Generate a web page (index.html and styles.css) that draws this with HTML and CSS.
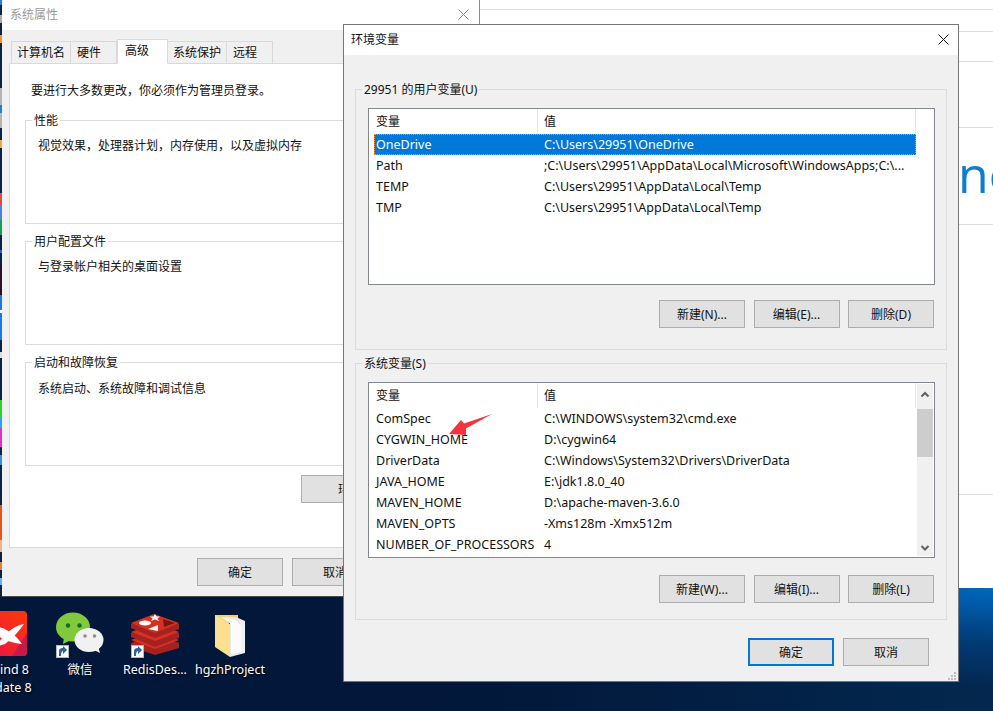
FILE: index.html
```html
<!DOCTYPE html>
<html lang="zh-CN">
<head>
<meta charset="UTF-8" />
<meta name="viewport" content="width=device-width, initial-scale=1" />
<title>环境变量</title>
<link rel="stylesheet" href="styles.css">
</head>
<body>

<div class="desktop">
  <div class="strip"></div>

  <!-- navegador detras de los dialogos -->
  <div class="browser">
    <div class="rule rule-a"></div>
    <div class="rule rule-b"></div>
    <div class="rule rule-c"></div>
    <div class="rule rule-d"></div>
    <div class="rule rule-e"><span class="big-word">no</span></div>
    <div class="rule rule-f"></div>
  </div>

  <div class="desk-icons">
    <div class="desk-icon">
      <svg width="48" height="48" viewBox="0 0 48 48">
        <defs>
          <linearGradient id="xm" x1="1" y1="0" x2="0" y2="1">
            <stop offset="0" stop-color="#ff3808"/>
            <stop offset="1" stop-color="#e6104e"/>
          </linearGradient>
        </defs>
        <rect x="-6" y="0" width="52" height="45" rx="4" fill="url(#xm)"/>
        <path d="M46 22 V41 a4 4 0 0 1 -4 4 H31 Z" fill="#c9184a"/>
        <path d="M14 15 C24 17 33 22 41 33 C33 32 24 30 14 23 Z" fill="#fff"/>
        <path d="M43 13 C36 14 26 19 14 36 L24 33 C32 27 38 20 43 13 Z" fill="#fff"/>
      </svg>
      <span class="desk-label">Xmind 8 Update 8</span>
    </div>
    <div class="desk-icon">
      <svg width="48" height="48" viewBox="0 0 48 48">
        <ellipse cx="17" cy="16" rx="17" ry="14.5" fill="#7fca3c"/>
        <path d="M8 26 L7 33 L15 29 Z" fill="#7fca3c"/>
        <circle cx="12" cy="14.5" r="2.2" fill="#1b6b1e"/>
        <circle cx="23.5" cy="14.5" r="2.2" fill="#1b6b1e"/>
        <ellipse cx="33" cy="29" rx="14.5" ry="12" fill="#f1f2f0"/>
        <path d="M38 39 L44 42 L42 35 Z" fill="#f1f2f0"/>
        <circle cx="29" cy="25" r="1.8" fill="#8d8d8d"/>
        <circle cx="38.5" cy="25" r="1.8" fill="#8d8d8d"/>
        <rect x="0.5" y="34.5" width="12" height="12" fill="#fff" stroke="#b5b5b5"/>
        <path d="M3 45 V40 Q3 37 7 37 V35 L11 39 L7 43 V40 Q5 40 5 45 Z" fill="#2f5f9f"/>
      </svg>
      <span class="desk-label">微信</span>
    </div>
    <div class="desk-icon">
      <svg width="48" height="48" viewBox="0 0 48 48">
        <path d="M0 32 L24 23 L48 32 V37 L24 44 L0 36 Z" fill="#a32320"/>
        <path d="M0 29 L24 38 L48 29 L24 20 Z" fill="#d92f22"/>
        <path d="M0 22 L24 13 L48 22 V27 L24 36 L0 26 Z" fill="#a32320"/>
        <path d="M0 21 L24 30 L48 21 L24 12 Z" fill="#d92f22"/>
        <path d="M0 13 L24 4 L48 13 V18 L24 27 L0 17 Z" fill="#a32320"/>
        <path d="M0 12 L23 3 L48 12 L24 22 Z" fill="#d92f22"/>
        <ellipse cx="14" cy="12" rx="6" ry="2.6" fill="#fff"/>
        <path d="M24 3 L25.5 5.5 L29 5.5 L26.5 7.5 L28 10 L24 8.5 L20 10 L21.5 7.5 L19 5.5 L22.5 5.5 Z" fill="#fff"/>
        <path d="M17 18 L27 14 L27 20 Z" fill="#fff"/>
        <path d="M32 8 L44 12 L33 16 Z" fill="#7a1411"/>
        <rect x="0.5" y="34.5" width="12" height="12" fill="#fff" stroke="#b5b5b5"/>
        <path d="M3 45 V40 Q3 37 7 37 V35 L11 39 L7 43 V40 Q5 40 5 45 Z" fill="#2f5f9f"/>
      </svg>
      <span class="desk-label">RedisDes...</span>
    </div>
    <div class="desk-icon">
      <svg width="48" height="48" viewBox="0 0 48 48">
        <path d="M9 4 H32 V12 H14 V38 L9 34 Z" fill="#f5d06f"/>
        <path d="M14 6 H30 L39 10 V42 L24 46 V12 Z" fill="#e9e9ec"/>
        <path d="M18 7 L29 9 L35 14 V41 L25 44 V13 Z" fill="#fbfbfb"/>
        <path d="M9 4 L24 13 V46 L9 36 Z" fill="#fce08f"/>
        <path d="M33 9 L39 11 V41 L35 42 V13 Z" fill="#f2f2f4"/>
      </svg>
      <span class="desk-label">hgzhProject</span>
    </div>
  </div>

  <!-- Propiedades del sistema -->
  <div class="window sys-window">
    <div class="titlebar sys-title">
      <span>系统属性</span>
      <svg class="close" width="11" height="11" viewBox="0 0 11 11"><path d="M0.5 0.5 L10.5 10.5 M10.5 0.5 L0.5 10.5" stroke="#8a8a8a" fill="none"/></svg>
    </div>
    <div class="sys-body">
      <div class="tabs">
        <div class="tab">计算机名</div>
        <div class="tab tab-short">硬件</div>
        <div class="tab tab-active">高级</div>
        <div class="tab">系统保护</div>
        <div class="tab tab-short">远程</div>
      </div>
      <div class="pane">
        <p class="pane-note">要进行大多数更改，你必须作为管理员登录。</p>
        <fieldset class="group sys-group">
          <legend>性能</legend>
          <p class="group-text">视觉效果，处理器计划，内存使用，以及虚拟内存</p>
        </fieldset>
        <fieldset class="group sys-group">
          <legend>用户配置文件</legend>
          <p class="group-text">与登录帐户相关的桌面设置</p>
        </fieldset>
        <fieldset class="group sys-group group-boot">
          <legend>启动和故障恢复</legend>
          <p class="group-text">系统启动、系统故障和调试信息</p>
        </fieldset>
        <div class="env-row">
          <button class="btn btn-env">环境变量(N)...</button>
        </div>
      </div>
      <div class="btn-row sys-buttons">
        <button class="btn">确定</button>
        <button class="btn">取消</button>
        <button class="btn">应用(A)</button>
      </div>
    </div>
  </div>

  <!-- Variables de entorno -->
  <div class="window env-window">
    <div class="titlebar env-title">
      <span>环境变量</span>
      <svg class="close" width="11" height="11" viewBox="0 0 11 11"><path d="M0.5 0.5 L10.5 10.5 M10.5 0.5 L0.5 10.5" stroke="#111" fill="none"/></svg>
    </div>
    <div class="env-body">
      <fieldset class="group user-group">
        <legend>29951 的用户变量(U)</legend>
        <div class="list user-list">
          <div class="list-body">
            <div class="row head"><div class="cell">变量</div><div class="cell">值</div></div>
            <div class="row selected"><div class="cell">OneDrive</div><div class="cell">C:\Users\29951\OneDrive</div></div>
            <div class="row"><div class="cell">Path</div><div class="cell">;C:\Users\29951\AppData\Local\Microsoft\WindowsApps;C:\...</div></div>
            <div class="row"><div class="cell">TEMP</div><div class="cell">C:\Users\29951\AppData\Local\Temp</div></div>
            <div class="row"><div class="cell">TMP</div><div class="cell">C:\Users\29951\AppData\Local\Temp</div></div>
          </div>
        </div>
        <div class="btn-row list-buttons">
          <button class="btn">新建(N)...</button>
          <button class="btn">编辑(E)...</button>
          <button class="btn">删除(D)</button>
        </div>
      </fieldset>

      <fieldset class="group system-group">
        <legend>系统变量(S)</legend>
        <div class="list system-list">
          <div class="list-body">
            <div class="row head"><div class="cell">变量</div><div class="cell">值</div></div>
            <div class="row"><div class="cell">ComSpec</div><div class="cell">C:\WINDOWS\system32\cmd.exe</div></div>
            <div class="row"><div class="cell">CYGWIN_HOME</div><div class="cell">D:\cygwin64</div></div>
            <div class="row"><div class="cell">DriverData</div><div class="cell">C:\Windows\System32\Drivers\DriverData</div></div>
            <div class="row"><div class="cell">JAVA_HOME</div><div class="cell">E:\jdk1.8.0_40</div></div>
            <div class="row"><div class="cell">MAVEN_HOME</div><div class="cell">D:\apache-maven-3.6.0</div></div>
            <div class="row"><div class="cell">MAVEN_OPTS</div><div class="cell">-Xms128m -Xmx512m</div></div>
            <div class="row"><div class="cell">NUMBER_OF_PROCESSORS</div><div class="cell">4</div></div>
          </div>
          <div class="scrollbar">
            <svg class="chevron" width="16" height="25" viewBox="0 0 16 25"><path d="M4.5 12.5 L8 9 L11.5 12.5" stroke="#606060" stroke-width="2" fill="none"/></svg>
            <div class="thumb"></div>
            <svg class="chevron chevron-end" width="16" height="17" viewBox="0 0 16 17"><path d="M4.5 7 L8 10.5 L11.5 7" stroke="#606060" stroke-width="2" fill="none"/></svg>
          </div>
        </div>
        <div class="btn-row list-buttons">
          <button class="btn">新建(W)...</button>
          <button class="btn">编辑(I)...</button>
          <button class="btn">删除(L)</button>
        </div>
      </fieldset>

      <div class="btn-row env-buttons">
        <button class="btn btn-default">确定</button>
        <button class="btn">取消</button>
      </div>
    </div>
    <svg class="grip" width="9" height="9" viewBox="0 0 9 9">
      <path d="M6 0h2v2h-2z M3 3h2v2h-2z M6 3h2v2h-2z M0 6h2v2h-2z M3 6h2v2h-2z M6 6h2v2h-2z" fill="#bdbdbd"/>
    </svg>
  </div>

  <!-- flecha roja de la anotacion -->
  <svg class="arrow" width="46" height="23" viewBox="0 0 46 23">
    <path d="M2 21 L14 7 L17 10.5 L45 1 L19 15.5 L19 22 Z" fill="#f2353c"/>
  </svg>
</div>

</body>
</html>
```

FILE: styles.css
```css
* { box-sizing: border-box; }
html, body { margin: 0; height: 100%; overflow: hidden; }
body { font-family: "Noto Sans", "Noto Sans CJK SC", sans-serif; font-size: 12px; color: #111; }

.desktop {
  position: relative; width: 993px; height: 711px; overflow: hidden;
  background:
    radial-gradient(ellipse 420px 100px at 100% 588px, #0068bf 0%, rgba(0, 70, 140, 0.6) 55%, rgba(0, 40, 80, 0) 100%),
    linear-gradient(90deg, #02173a 0%, #02183a 50%, #03284f 100%);
}

/* barra de iconos cortada a la izquierda */
.strip {
  position: absolute; left: 0; top: 0; width: 2px; height: 597px;
  background: linear-gradient(180deg,
    #2a7fd0 0 5px, #0c2340 5px 15px, #aaa 15px 23px, #0c2340 23px 35px, #e8962a 35px 43px,
    #0c2340 43px 88px, #b5b5b5 88px 105px, #2080d8 105px 113px, #b5b5b5 113px 128px,
    #0c2340 128px 140px, #e0b040 140px 148px, #0c2340 148px 193px, #d84a4a 193px 205px,
    #4a80e0 205px 220px, #1d9d5a 220px 235px, #0c2340 235px 250px, #2a60d0 250px 253px,
    #0c2340 253px 265px, #2a1020 265px 295px, #1a78e0 295px 310px, #fff 310px 313px,
    #1a78e0 313px 340px, #0c2340 340px 352px, #ddd 352px 358px, #0c2340 358px 400px,
    #30d030 400px 418px, #30a0f0 418px 428px, #e030c0 428px 447px, #0c2340 447px 455px,
    #3090e0 455px 465px, #0c2340 465px 505px, #e8541e 505px 540px, #f2b090 540px 552px,
    #0c2340 552px 562px, #e08030 562px 570px, #0c2340 570px 578px, #60b0f0 578px 585px,
    #0c2340 585px);
}

.browser {
  position: absolute; left: 480px; top: 0; width: 513px; height: 588px;
  background: #fff; overflow: hidden;
}
.rule { border-bottom: 1px solid #dcdcdc; }
.rule-a { height: 10px; }
.rule-b { height: 22px; }
.rule-c { height: 30px; }
.rule-d { height: 66px; }
.rule-e { height: 97px; padding-left: 478px; white-space: nowrap; }
.rule-f { height: 270px; }
.big-word {
  display: block; font-family: "Open Sans", sans-serif; font-weight: 400;
  font-size: 50px; line-height: 92px; color: #0a7fd0;
}

.desk-icons { position: absolute; left: -32.5px; top: 611px; display: flex; }
.desk-icon { width: 75px; display: flex; flex-direction: column; align-items: center; }
.desk-label {
  margin-top: 2px; width: 75px; text-align: center; color: #fff; line-height: 18px;
  text-shadow: 1px 1px 2px #000; font-size: 12.5px;
}

.window { position: absolute; background: #f0f0f0; }
.titlebar {
  position: relative; height: 30px; background: #fff; line-height: 30px; padding-left: 8px;
}
.close { position: absolute; top: 9px; }

.sys-window {
  left: 2px; top: 0; width: 478px; height: 597px;
  border-right: 1px solid #8a8a8a; border-bottom: 1px solid #4a4a4a;
}
.sys-title { color: #9a9a9a; }
.sys-title .close { right: 10px; }
.sys-body { padding: 9px 0 0 7px; }

.tabs { display: flex; padding-left: 2px; height: 25px; margin-bottom: -1px; position: relative; }
.tab {
  height: 23px; margin-top: 2px; padding: 0 5px; line-height: 22px;
  border: 1px solid #d9d9d9; border-left-width: 0; background: #f0f0f0;
}
.tab:first-child { border-left-width: 1px; }
.tab-short { padding: 0 15px 0 6px; }
.tab-active {
  height: 25px; margin-top: 0; padding: 0 18px 0 7px; line-height: 21px;
  background: #fff; border-bottom-color: #fff; border-left-width: 1px;
}
.pane { width: 462px; height: 485px; border: 1px solid #d9d9d9; background: #fff; padding-left: 15px; }
.pane-note { margin: 19px 0 13px 6px; line-height: 16px; }

.group { margin: 0; padding: 0; border: 1px solid #dcdcdc; min-width: 0; }
.group legend { margin-left: 6px; padding: 0 2px; line-height: 18px; height: 16px; }
.sys-group { width: 430px; height: 112px; margin-bottom: 9px; }
.group-text { margin: 0; padding: 10px 0 0 12px; line-height: 16px; }
.group-boot .group-text { padding-top: 11px; }
.env-row { display: flex; justify-content: flex-end; width: 430px; margin-top: 8px; }

.btn {
  width: 86px; height: 28px; padding: 0; background: #e1e1e1; border: 1px solid #adadad;
  font: inherit; color: #111; white-space: nowrap;
}
.btn-env { width: 154px; padding-right: 6px; }
.btn-default { border: 2px solid #0078d7; }
.btn-row { display: flex; justify-content: flex-end; gap: 9px; }
.sys-buttons { width: 464px; margin-top: 10px; }

.env-window {
  left: 343px; top: 24px; width: 616px; height: 658px; border: 1px solid #777;
}
.env-title { padding-left: 7px; }
.env-title .close { right: 9px; }
.env-body { padding: 26px 11px 0; }
.user-group { height: 269px; }
.system-group { height: 265px; margin-top: 5px; }

.list { display: flex; margin: 11px 0 0 12px; width: 567px; border: 1px solid #828790; background: #fff; }
.user-list { height: 177px; }
.system-list { height: 176px; }
.list-body { width: 548px; padding: 0 1px 0 5px; }

.row { display: grid; grid-template-columns: 164px 1fr; height: 21px; line-height: 21px; font-size: 12.5px; }
.cell { padding-left: 2px; white-space: nowrap; }
.cell + .cell { padding-left: 6px; }
.head { height: 25px; line-height: 25px; padding-bottom: 1px; font-size: 12px; }
.head .cell { border-right: 1px solid #e5e5e5; }
.selected { background: #0078d7; color: #fff; outline: 1px dotted #ff9a3c; outline-offset: -1px; }

.scrollbar {
  width: 16px; margin: 1px 0; background: #f0f0f0; display: flex; flex-direction: column;
}
.chevron { display: block; flex: none; }
.chevron-end { margin-top: auto; }
.thumb { height: 48px; background: #cdcdcd; }

.list-buttons { width: 578px; gap: 8.5px; }
.user-group .list-buttons { margin-top: 15px; }
.system-group .list-buttons { margin-top: 17px; }
.env-buttons { margin-top: 18px; padding-right: 18px; }

.grip { position: absolute; right: 1px; bottom: 0; }
.arrow { position: absolute; left: 447px; top: 413px; }
```
